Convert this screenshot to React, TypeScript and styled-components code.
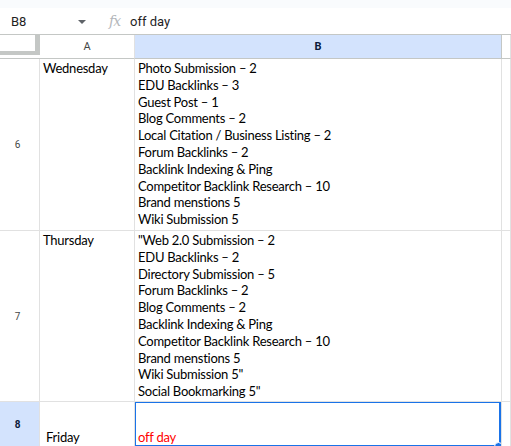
import React from "react";
import styled, { createGlobalStyle } from "styled-components";

const GlobalStyle = createGlobalStyle`
  html, body {
    margin: 0;
    padding: 0;
    background: #ffffff;
    overflow: hidden;
  }
  * { box-sizing: border-box; }
`;

const Page = styled.div`
  width: 511px;
  height: 446px;
  overflow: hidden;
  font-family: Roboto, "Liberation Sans", Arial, sans-serif;
`;

const TopStrip = styled.div`
  height: 8px;
  background: #f9fbfd;
`;

const FormulaBar = styled.div`
  height: 26px;
  display: flex;
  align-items: center;
  background: #ffffff;
  font-size: 13px;
  color: #1f1f1f;
`;

const NameBox = styled.div`
  width: 100px;
  display: flex;
  align-items: center;
  justify-content: space-between;
  padding: 0 14px 0 11px;
`;

const Caret = styled.span`
  width: 0;
  height: 0;
  border-left: 4px solid transparent;
  border-right: 4px solid transparent;
  border-top: 4px solid #5f6368;
  margin-top: 1px;
`;

const FxIcon = styled.span`
  width: 21px;
  margin-left: 9px;
  font-family: "DejaVu Serif", "Liberation Serif", serif;
  font-style: italic;
  font-size: 14px;
  color: #b4b7bb;
  letter-spacing: -1px;
`;

const FormulaValue = styled.span`
  margin-left: 0;
`;

const Grid = styled.div`
  display: grid;
  grid-template-columns: 40px 95px 367px 1fr;
  grid-template-rows: 24px 172px 171px 45px;
  border-top: 1px solid #c4c7c5;
`;

const Cell = styled.div`
  position: relative;
  border-right: 1px solid #e1e1e1;
  border-bottom: 1px solid #e1e1e1;
  background: #ffffff;
`;

const ColHeader = styled(Cell)<{ $active?: boolean }>`
  display: flex;
  align-items: center;
  justify-content: center;
  border-bottom-color: #c4c7c5;
  border-right-color: ${(p) => (p.$active ? "#c4c7c5" : "#e1e1e1")};
  background: ${(p) => (p.$active ? "#d3e3fd" : "#ffffff")};
  color: ${(p) => (p.$active ? "#0b1a3a" : "#444746")};
  font-size: 11px;
  font-weight: ${(p) => (p.$active ? 700 : 400)};
`;

const Corner = styled(Cell)`
  border-right: none;
  border-bottom-color: #c4c7c5;
  padding-bottom: 3px;
`;

const CornerFreeze = styled.div`
  height: 100%;
  border-right: 5px solid #c4c7c5;
  border-bottom: 4px solid #c4c7c5;
`;

const RowHeader = styled(Cell)<{ $active?: boolean }>`
  display: flex;
  align-items: center;
  justify-content: center;
  background: ${(p) => (p.$active ? "#d3e3fd" : "#ffffff")};
  color: ${(p) => (p.$active ? "#0b1a3a" : "#444746")};
  font-size: 10px;
  font-weight: ${(p) => (p.$active ? 700 : 400)};
  padding-right: 4px;
`;

const TextCell = styled(Cell)<{ $bottom?: boolean; $color?: string }>`
  display: flex;
  flex-direction: column;
  justify-content: ${(p) => (p.$bottom ? "flex-end" : "flex-start")};
  padding: ${(p) => (p.$bottom ? "0 3px 0 3px" : "1px 3px 0 3px")};
  font-family: Lato, "Open Sans", sans-serif;
  font-size: 13px;
  letter-spacing: -0.25px;
  line-height: 16.8px;
  color: ${(p) => p.$color || "#000000"};
  white-space: pre-wrap;
  overflow: hidden;
`;

const Selection = styled.div`
  position: absolute;
  inset: -1px 0 -1px -1px;
  border: 2px solid #1a73e8;
  pointer-events: none;
`;

const FillHandle = styled.div`
  position: absolute;
  right: -4px;
  bottom: -6px;
  width: 9px;
  height: 9px;
  border-radius: 50%;
  background: #1a73e8;
  border: 1px solid #ffffff;
`;

const rows = [
  {
    num: "6",
    day: "Wednesday",
    tasks: [
      "Photo Submission – 2",
      "EDU Backlinks – 3",
      "Guest Post – 1",
      "Blog Comments – 2",
      "Local Citation / Business Listing – 2",
      "Forum Backlinks – 2",
      "Backlink Indexing & Ping",
      "Competitor Backlink Research – 10",
      "Brand menstions 5",
      "Wiki Submission 5",
    ],
  },
  {
    num: "7",
    day: "Thursday",
    tasks: [
      "\"Web 2.0 Submission – 2",
      "EDU Backlinks – 2",
      "Directory Submission – 5",
      "Forum Backlinks – 2",
      "Blog Comments – 2",
      "Backlink Indexing & Ping",
      "Competitor Backlink Research – 10",
      "Brand menstions 5",
      "Wiki Submission 5\"",
      "Social Bookmarking 5\"",
    ],
  },
];

export default function App() {
  return (
    <Page>
      <GlobalStyle />
      <TopStrip />
      <FormulaBar>
        <NameBox>
          <span>B8</span>
          <Caret />
        </NameBox>
        <FxIcon>fx</FxIcon>
        <FormulaValue>off day</FormulaValue>
      </FormulaBar>
      <Grid>
        <Corner>
          <CornerFreeze />
        </Corner>
        <ColHeader>A</ColHeader>
        <ColHeader $active>B</ColHeader>
        <ColHeader />

        {rows.map((r) => (
          <React.Fragment key={r.num}>
            <RowHeader>{r.num}</RowHeader>
            <TextCell>{r.day}</TextCell>
            <TextCell>{r.tasks.join("\n")}</TextCell>
            <Cell />
          </React.Fragment>
        ))}

        <RowHeader $active>8</RowHeader>
        <TextCell $bottom>{" Friday"}</TextCell>
        <TextCell $bottom $color="#ff0000">
          off day
          <Selection>
            <FillHandle />
          </Selection>
        </TextCell>
        <Cell />
      </Grid>
    </Page>
  );
}
